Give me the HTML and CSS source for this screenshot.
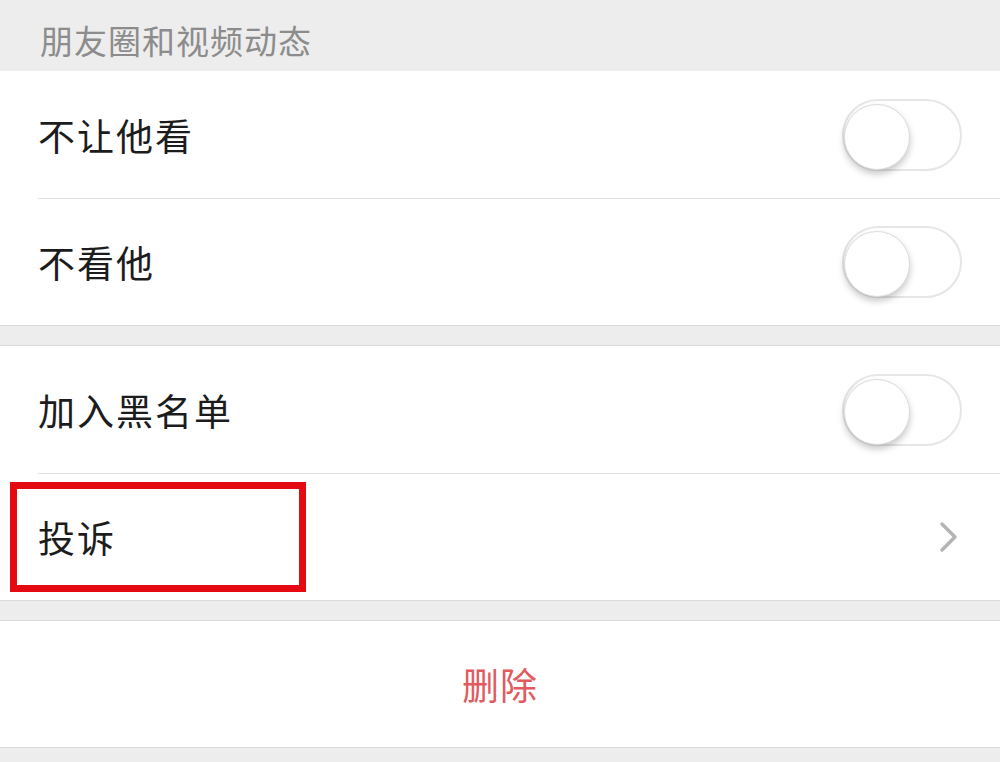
FILE: index.html
```html
<!DOCTYPE html>
<html lang="zh-CN">
<head>
    <meta charset="UTF-8">
    <meta name="viewport" content="width=device-width, initial-scale=1.0">
    <title>资料设置</title>
    <link rel="stylesheet" href="styles.css">
</head>
<body>
    <div class="section-title">朋友圈和视频动态</div>

    <div class="group">
        <div class="cell">
            <span class="label">不让他看</span>
            <span class="switch"><span class="knob"></span></span>
        </div>
        <div class="cell">
            <span class="label">不看他</span>
            <span class="switch"><span class="knob"></span></span>
        </div>
    </div>

    <div class="group">
        <div class="cell">
            <span class="label">加入黑名单</span>
            <span class="switch"><span class="knob"></span></span>
        </div>
        <div class="cell marked">
            <span class="label">投诉</span>
            <svg class="arrow" width="20" height="32" viewBox="0 0 20 32">
                <polyline points="3,3 16,16 3,29" fill="none" stroke="#b4b4b4" stroke-width="3.5" stroke-linecap="round" stroke-linejoin="round"/>
            </svg>
            <span class="highlight"></span>
        </div>
    </div>

    <div class="group">
        <div class="cell danger">删除</div>
    </div>
</body>
</html>
```

FILE: styles.css
```css
body {
    margin: 0;
    background: #ededed;
    font-family: "Noto Sans CJK SC", "Noto Sans", sans-serif;
    color: #1c1c1c;
}
.section-title {
    height: 71px;
    padding-left: 40px;
    font-size: 33px;
    letter-spacing: 1px;
    line-height: 80px;
    color: #8c8c8c;
    box-sizing: border-box;
}
.group {
    background: #fff;
    border-bottom: 1px solid #dadada;
    margin-bottom: 19px;
}
.group + .group {
    border-top: 1px solid #dadada;
}
.cell {
    display: flex;
    align-items: center;
    justify-content: space-between;
    height: 127px;
    margin-left: 38px;
    padding-right: 38px;
    position: relative;
}
.cell + .cell {
    border-top: 1px solid #e3e3e3;
    height: 126px;
}
.label {
    font-size: 37px;
    letter-spacing: 2px;
}
.switch {
    position: relative;
    width: 120px;
    height: 72px;
    border-radius: 36px;
    border: 2px solid #e6e6e6;
    background: #fff;
    box-sizing: border-box;
}
.knob {
    position: absolute;
    left: 0;
    top: 3px;
    width: 66px;
    height: 66px;
    border-radius: 50%;
    background: #fff;
    border: 1px solid #dcdcdc;
    box-sizing: border-box;
    box-shadow: 0 4px 7px rgba(0, 0, 0, 0.22);
}
.arrow {
    margin-right: 3px;
}
.highlight {
    position: absolute;
    left: -28px;
    top: 8px;
    width: 296px;
    height: 110px;
    border: 7px solid #e50a12;
    box-sizing: border-box;
}
.danger {
    justify-content: center;
    margin-left: 0;
    padding-right: 0;
    height: 126px;
    font-size: 37px;
    letter-spacing: 1px;
    color: #e25a5e;
}
```
